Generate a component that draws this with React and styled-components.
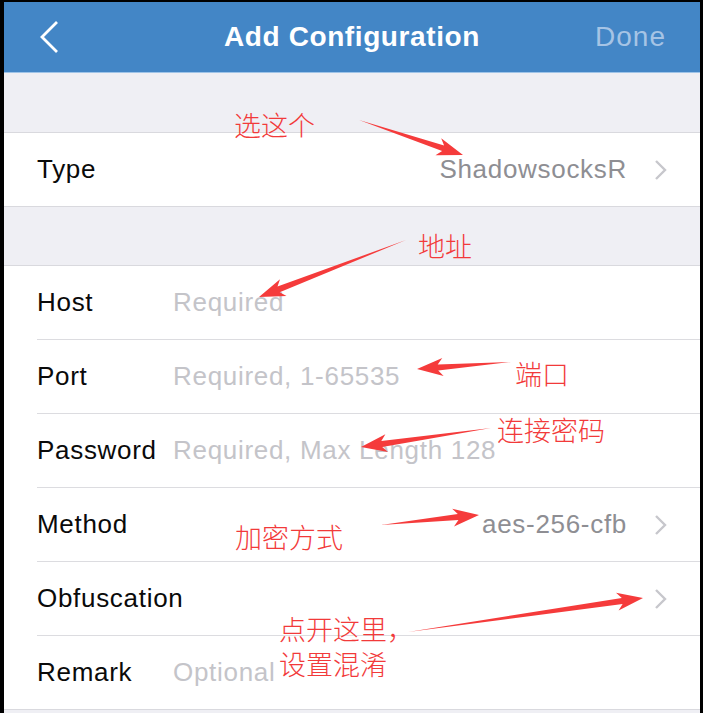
import React from "react";
import styled, { createGlobalStyle } from "styled-components";

const GlobalStyle = createGlobalStyle`
  html, body {
    margin: 0;
    padding: 0;
    background: #000;
  }
  body {
    font-family: "Liberation Sans", Arial, sans-serif;
  }
`;

const Frame = styled.div`
  position: relative;
  width: 703px;
  height: 713px;
  box-sizing: border-box;
  padding: 2px 3px 0 4px;
  background: #000;
  overflow: hidden;
`;

const Screen = styled.div`
  display: flex;
  flex-direction: column;
  height: 100%;
  background: #efeff4;
`;

const NavBar = styled.header`
  display: grid;
  grid-template-columns: 120px 1fr 120px;
  align-items: center;
  height: 70px;
  padding: 0 34px;
  background: #4386c6;
  border-bottom: 1px solid #9fc4e8;
`;

const BackButton = styled.div`
  display: flex;
  align-items: center;
`;

const Title = styled.h1`
  margin: 0;
  text-align: center;
  color: #fff;
  font-size: 28px;
  font-weight: 700;
  letter-spacing: 0.6px;
`;

const DoneButton = styled.div`
  text-align: right;
  color: #a6c4e5;
  font-size: 28px;
  letter-spacing: 1px;
`;

const Gap = styled.div`
  height: ${(p) => p.$h}px;
`;

const Group = styled.section`
  background: #fff;
  border-top: 1px solid #d9d9de;
  border-bottom: 1px solid #d9d9de;
`;

const Row = styled.div`
  display: flex;
  align-items: center;
  height: 73px;
  margin-left: 33px;
  padding-right: 33px;
  border-top: ${(p) => (p.$first ? "none" : "1px solid #dcdce0")};
  font-size: 26px;
  letter-spacing: 0.7px;
`;

const Label = styled.span`
  width: 136px;
  flex: none;
  color: #0a0a0a;
`;

const Placeholder = styled.span`
  flex: 1;
  color: #c4c4c9;
  white-space: nowrap;
`;

const Value = styled.span`
  flex: 1;
  text-align: right;
  color: #8e8e93;
  margin-right: 27px;
`;

const Overlay = styled.svg`
  position: absolute;
  left: 0;
  top: 0;
  pointer-events: none;
`;

const Note = styled.div`
  position: absolute;
  left: ${(p) => p.$x}px;
  top: ${(p) => p.$y}px;
  color: #f23a3a;
  font-family: "Noto Sans CJK SC", sans-serif;
  font-weight: 300;
  font-size: 27px;
  line-height: 35px;
  white-space: pre;
`;

const Chevron = () => (
  <svg width="13" height="22" viewBox="0 0 13 22">
    <path d="M2 2 L11 11 L2 20" fill="none" stroke="#c7c7cc" strokeWidth="2.4" />
  </svg>
);

const BackIcon = () => (
  <svg width="22" height="34" viewBox="0 0 22 34">
    <path d="M19 2 L4 17 L19 32" fill="none" stroke="#fff" strokeWidth="2.8" />
  </svg>
);

function arrowPoints([x1, y1], [x2, y2]) {
  const dx = x2 - x1;
  const dy = y2 - y1;
  const L = Math.hypot(dx, dy);
  const ux = dx / L;
  const uy = dy / L;
  const h = 26;
  const w = 9;
  const s = 3;
  const local = [
    [0, 0],
    [L - h + 5, s],
    [L - h, w],
    [L, 0],
    [L - h, -w],
    [L - h + 5, -s],
  ];
  return local
    .map(([a, b]) => `${(x1 + ux * a - uy * b).toFixed(1)},${(y1 + uy * a + ux * b).toFixed(1)}`)
    .join(" ");
}

const arrows = [
  [[359, 120], [463, 155]],
  [[406, 240], [259, 297]],
  [[511, 362], [417, 369]],
  [[491, 428], [361, 447]],
  [[381, 525], [479, 515]],
  [[408, 632], [643, 598]],
];

const notes = [
  { x: 234, y: 107, t: "选这个" },
  { x: 418, y: 228, t: "地址" },
  { x: 515, y: 356, t: "端口" },
  { x: 497, y: 412, t: "连接密码" },
  { x: 235, y: 519, t: "加密方式" },
  { x: 279, y: 611, t: "点开这里，" },
  { x: 279, y: 646, t: "设置混淆" },
];

const fields = [
  { label: "Host", placeholder: "Required" },
  { label: "Port", placeholder: "Required, 1-65535" },
  { label: "Password", placeholder: "Required, Max Length 128" },
  { label: "Method", value: "aes-256-cfb" },
  { label: "Obfuscation", value: "" },
  { label: "Remark", placeholder: "Optional" },
];

export default function App() {
  return (
    <Frame>
      <GlobalStyle />
      <Screen>
        <NavBar>
          <BackButton>
            <BackIcon />
          </BackButton>
          <Title>Add Configuration</Title>
          <DoneButton>Done</DoneButton>
        </NavBar>
        <Gap $h={59} />
        <Group>
          <Row $first>
            <Label>Type</Label>
            <Value>ShadowsocksR</Value>
            <Chevron />
          </Row>
        </Group>
        <Gap $h={58} />
        <Group>
          {fields.map((f, i) => (
            <Row key={f.label} $first={i === 0}>
              <Label>{f.label}</Label>
              {f.placeholder !== undefined ? (
                <Placeholder>{f.placeholder}</Placeholder>
              ) : (
                <>
                  <Value>{f.value}</Value>
                  <Chevron />
                </>
              )}
            </Row>
          ))}
        </Group>
      </Screen>
      <Overlay width="703" height="713">
        {arrows.map((a, i) => (
          <polygon key={i} points={arrowPoints(a[0], a[1])} fill="#f53b3b" />
        ))}
      </Overlay>
      {notes.map((n) => (
        <Note key={n.t} $x={n.x} $y={n.y}>
          {n.t}
        </Note>
      ))}
    </Frame>
  );
}
